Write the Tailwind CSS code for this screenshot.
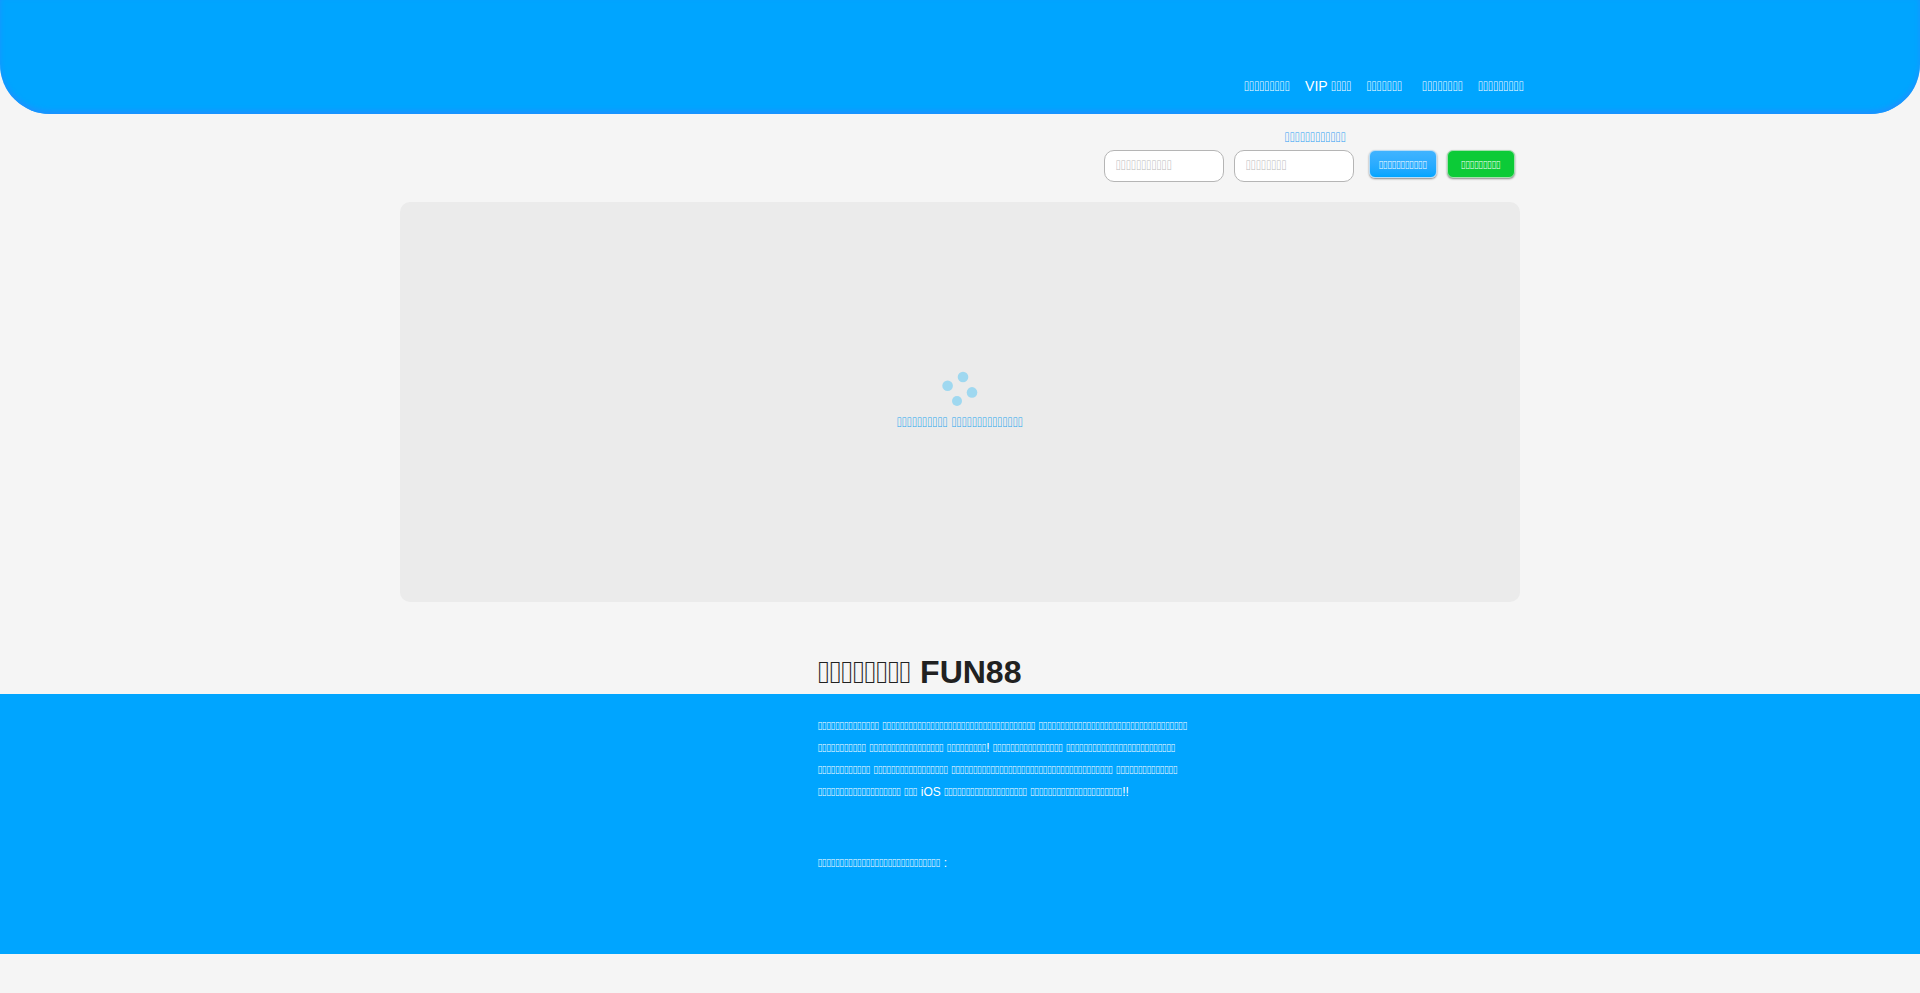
<!DOCTYPE html>
<html lang="th">
<head>
  <meta charset="UTF-8">
  <meta name="viewport" content="width=device-width, initial-scale=1.0">
  <title>FUN88</title>
  <script src="https://cdn.jsdelivr.net/npm/@tailwindcss/browser@4"></script>
</head>
<body class="min-h-screen bg-[#f5f5f5] font-['Liberation_Sans',Arial,sans-serif] text-sm text-[#212121]">

  <header class="h-[114px] rounded-b-[50px] bg-[#00a5ff] shadow-[inset_0_-3px_5px_#1e90ff]">
    <nav class="mx-auto flex max-w-[1128px] justify-end gap-[15px] pt-[75px] leading-[22px] text-white">
      <a href="#">{9}</a>
      <a href="#">VIP {4}</a>
      <a href="#" class="pr-[5px]">{7}</a>
      <a href="#">{8}</a>
      <a href="#">{9}</a>
    </nav>
  </header>

  <main>
    <!-- login -->
    <form class="mx-auto max-w-[1120px] pt-[11px] pr-[5px]">
      <div class="flex justify-end pr-[169px] pb-px">
        <a href="#" class="leading-6 text-[#2a9df4]">{12}</a>
      </div>
      <div class="flex items-start justify-end">
        <input type="text" aria-label="Username" placeholder="{11}" class="mr-[10px] h-8 w-[120px] rounded-[10px] border border-[#b5b5b5] bg-white px-[11px] font-['DejaVu_Math_TeX_Gyre','Liberation_Sans',sans-serif] placeholder:text-[#bbbbbb]">
        <input type="password" aria-label="Password" placeholder="{8}" class="mr-[15px] h-8 w-[120px] rounded-[10px] border border-[#b5b5b5] bg-white px-[11px] font-['DejaVu_Math_TeX_Gyre','Liberation_Sans',sans-serif] placeholder:text-[#bbbbbb]">
        <button type="submit" class="mr-[10px] h-7 w-[68px] rounded-md border border-[#b9dcf5] bg-linear-to-b from-[#40b3ff] to-[#00a5ff] pt-0.5 text-xs text-white shadow-[0_1px_2px_#888888]">{11}</button>
        <button type="button" class="h-7 w-[68px] rounded-md border border-[#a5e0b0] bg-[#0ccb37] pt-0.5 text-xs text-white shadow-[0_1px_2px_#888888]">{9}</button>
      </div>
    </form>

    <!-- banner loader -->
    <section class="mx-auto mt-5 flex h-[400px] max-w-[1120px] flex-col items-center rounded-[10px] bg-[#ebebeb] pt-[168px]">
      <svg class="h-9 w-9" viewBox="0 0 36 36" fill="#9fd8f0" aria-hidden="true">
        <circle cx="21" cy="7" r="5.3"/>
        <circle cx="5.6" cy="15.8" r="5.3"/>
        <circle cx="30" cy="22.4" r="5.3"/>
        <circle cx="15" cy="31" r="5"/>
      </svg>
      <p class="mt-1 leading-6 text-[#1aa6ee]">{10} {14}</p>
    </section>

    <div class="mx-auto mt-[50px] max-w-[1120px] pb-px pl-[418px]">
      <h1 class="text-[32px] leading-[41px] font-bold whitespace-nowrap">{8} FUN88</h1>
    </div>

    <section class="h-[260px] bg-[#00a5ff] text-xs text-white">
      <div class="mx-auto max-w-[1120px] pt-[21px] pl-[418px] whitespace-nowrap">
        <p class="leading-[22px]">
          {14} {35} {34}<br>
          {11} {17} {9}! {16} {25}<br>
          {12} {17} {37} {14}<br>
          {19} {3} iOS {19} {21}!!
        </p>
        <p class="mt-[49px] leading-[22px]">{28} :</p>
      </div>
    </section>
  </main>

  <script>
    // {n} becomes a run of n empty glyph boxes
    const boxes = (m, n) => '\u{50005}'.repeat(Number(n));

    document.querySelectorAll('a, button, p, h1').forEach((el) => {
      el.innerHTML = el.innerHTML.replace(/\{(\d+)\}/g, (m, n) =>
        `<span class="font-['DejaVu_Math_TeX_Gyre'] leading-none font-normal">${boxes(m, n)}</span>`);
    });

    document.querySelectorAll('input').forEach((input) => {
      input.placeholder = input.placeholder.replace(/\{(\d+)\}/g, boxes);
    });
  </script>
</body>
</html>
